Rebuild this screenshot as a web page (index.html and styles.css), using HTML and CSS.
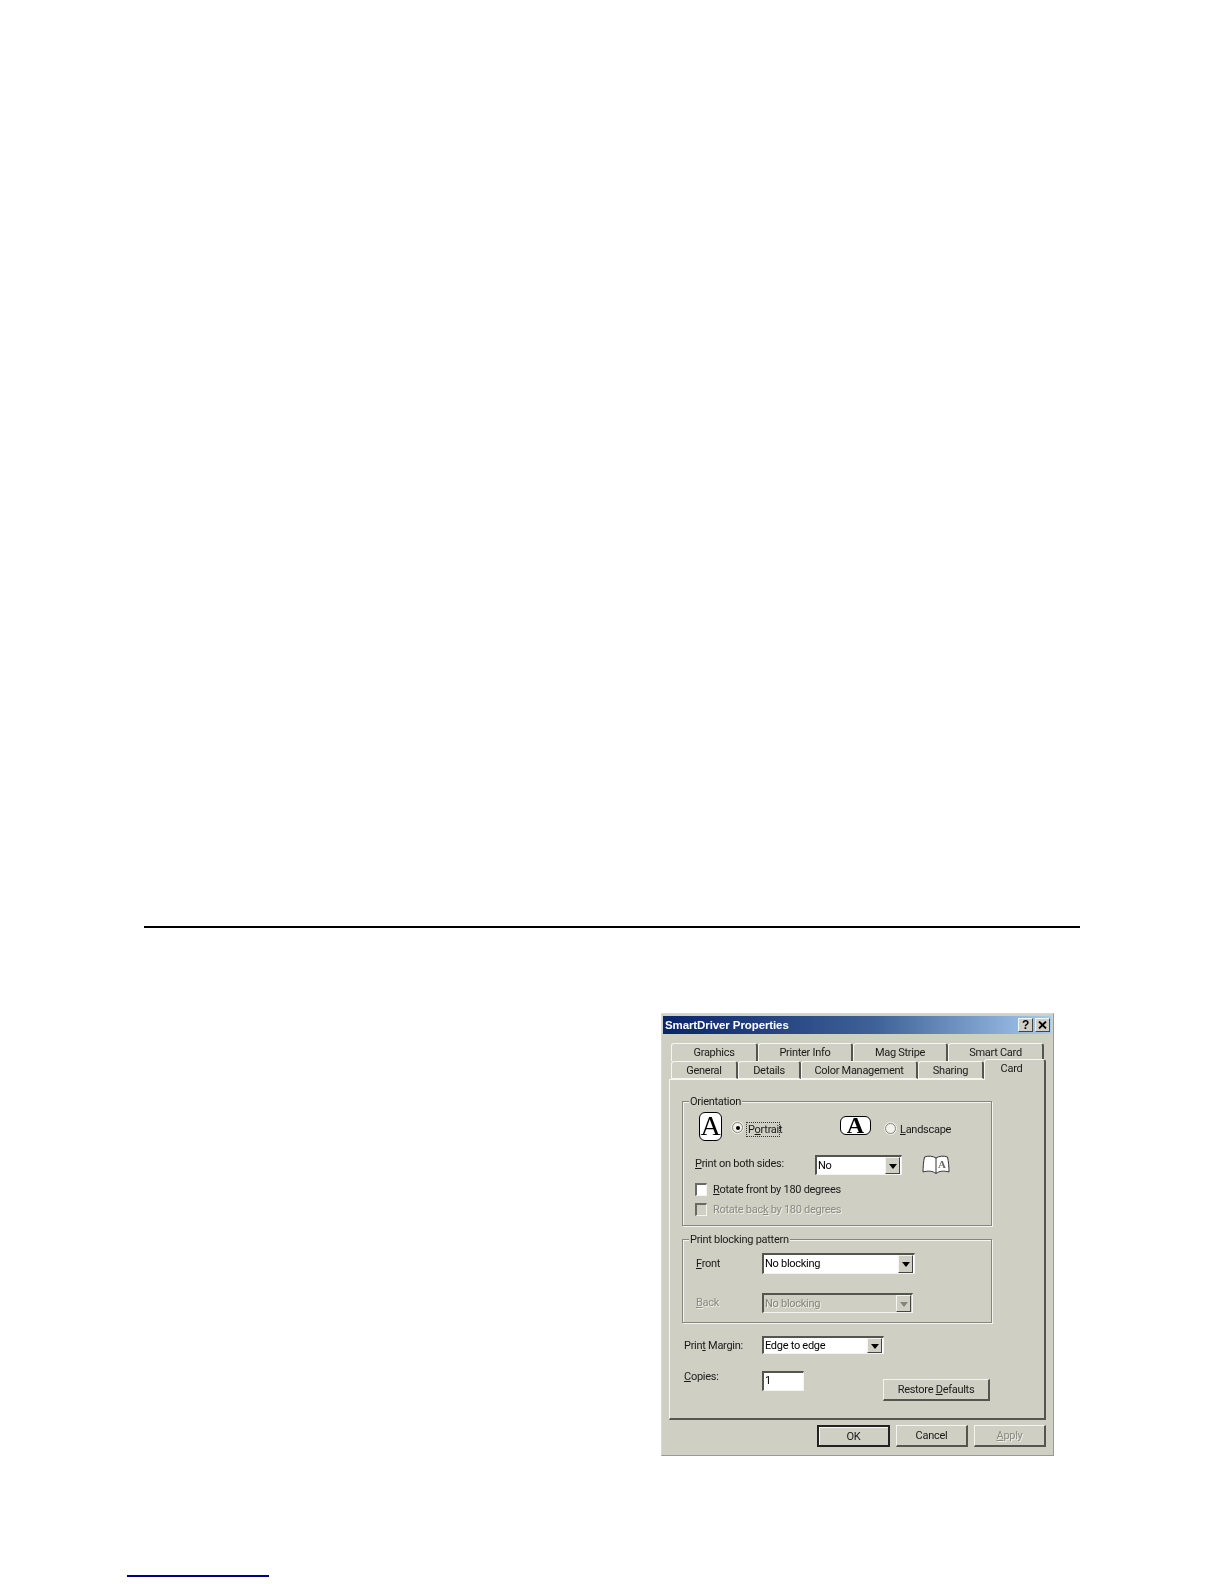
FILE: index.html
```html
<!DOCTYPE html>
<html lang="en">
<head>
<meta charset="utf-8">
<title>SmartDriver Properties</title>
<link rel="stylesheet" href="styles.css">
</head>
<body>
<div class="rule"></div>
<div class="dialog">
  <div class="titlebar">
    <span class="title">SmartDriver Properties</span>
    <span class="caption-btns">
      <span class="cap-btn">?</span>
      <span class="cap-btn"><svg width="9" height="8" viewBox="0 0 9 8"><path d="M1 0.5 L8 7.5 M8 0.5 L1 7.5" stroke="#000" stroke-width="1.8" fill="none"/></svg></span>
    </span>
  </div>
  <div class="tabs">
    <div class="tab-row back">
      <div class="tab w87">Graphics</div>
      <div class="tab w95">Printer Info</div>
      <div class="tab w95">Mag Stripe</div>
      <div class="tab w96">Smart Card</div>
    </div>
    <div class="tab-row front">
      <div class="tab w67">General</div>
      <div class="tab w63">Details</div>
      <div class="tab w117">Color Management</div>
      <div class="tab w66">Sharing</div>
      <div class="tab active">Card</div>
    </div>
  </div>
  <div class="panel">
    <div class="group group-orient">
      <span class="legend">Orientation</span>
      <div class="orient-row">
        <div class="page-icon portrait">A</div>
        <span class="radio checked"></span>
        <span class="focus">P<u>o</u>rtrait</span>
        <div class="page-icon landscape">A</div>
        <span class="radio"></span>
        <span class="radio-label"><u>L</u>andscape</span>
      </div>
      <div class="both-row">
        <span class="both-label"><u>P</u>rint on both sides:</span>
        <div class="combo combo-no"><span>No</span><span class="drop"></span></div>
        <svg class="book" width="28" height="20" viewBox="0 0 28 20">
          <path d="M1 17 C1 13 1.500 6 2.500 2 C6 0.500 11 1 14 3 C17 1 22 0.500 25.500 2 C26.500 6 27 13 27 17 C22 15.500 17 16 14 18.500 C11 16 6 15.500 1 17 Z" fill="#fff" stroke="#333" stroke-width="1"/>
          <path d="M14 3 V18.500" stroke="#333" stroke-width="1"/>
          <text x="16" y="13" class="book-a">A</text>
        </svg>
      </div>
      <label class="check-row"><span class="check"></span><span><u>R</u>otate front by 180 degrees</span></label>
      <label class="check-row off"><span class="check"></span><span>Rotate bac<u>k</u> by 180 degrees</span></label>
    </div>
    <div class="group group-block">
      <span class="legend">Print blocking pattern</span>
      <div class="block-row first">
        <span class="block-label"><u>F</u>ront</span>
        <div class="combo combo-wide"><span>No blocking</span><span class="drop"></span></div>
      </div>
      <div class="block-row off">
        <span class="block-label"><u>B</u>ack</span>
        <div class="combo combo-wide disabled"><span>No blocking</span><span class="drop"></span></div>
      </div>
    </div>
    <div class="margin-row">
      <span class="field-label">Prin<u>t</u> Margin:</span>
      <div class="combo combo-margin"><span>Edge to edge</span><span class="drop"></span></div>
    </div>
    <div class="copies-row">
      <span class="field-label"><u>C</u>opies:</span>
      <div class="input">1</div>
      <div class="btn restore"><span>Restore <u>D</u>efaults</span></div>
    </div>
  </div>
  <div class="footer">
    <div class="btn ok">OK</div>
    <div class="btn cancel">Cancel</div>
    <div class="btn apply"><span><u>A</u>pply</span></div>
  </div>
</div>
<div class="footer-link"></div>
</body>
</html>
```

FILE: styles.css
```css
* { box-sizing: border-box; }
html, body { margin: 0; padding: 0; background: #fff; }
body { height: 1584px; overflow: hidden; }

.rule { height: 2px; width: 936px; background: #000; margin: 926px 0 0 144px; }
.footer-link { height: 2px; width: 142px; background: #000080; margin: 119px 0 0 127px; }

.dialog {
  width: 393px; height: 443px; margin: 85px 0 0 661px;
  background: #cfcfc3;
  border: 1px solid #9a9a94; border-top-color: #d8d8d4; border-left-color: #d8d8d4;
  padding: 2px 2px 0 1px;
  font: 11px/14px Roboto, "Liberation Sans", sans-serif;
  letter-spacing: -0.28px;
  color: #1a1a1a;
  filter: blur(0.3px);
}
.titlebar {
  height: 18px; display: flex; align-items: center; justify-content: space-between;
  background: linear-gradient(90deg, #0a246a 0%, #3f6298 55%, #a6caf0 100%);
  padding: 0 1px 0 2px;
}
.title { color: #fff; font: bold 11.500px/18px "Liberation Sans", sans-serif; letter-spacing: -0.1px; }
.caption-btns { display: flex; gap: 2px; }
.cap-btn {
  width: 15px; height: 14px; display: flex; align-items: center; justify-content: center;
  background: #cfcfc3; font: bold 12px/14px "Liberation Sans", sans-serif; color: #000;
  border: 1px solid; border-color: #f4f4f0 #444 #444 #f4f4f0;
}

.tabs { margin-top: 9px; height: 36px; position: relative; z-index: 1; }
.tab-row { display: flex; height: 18px; margin-left: 8px; }
.tab-row.front { align-items: flex-end; }
.tab {
  height: 18px; text-align: center; line-height: 17px;
  border-top: 1px solid #f6f6f2; border-left: 1px solid #f6f6f2; border-right: 2px solid #55554f;
  border-radius: 3px 3px 0 0;
  background: #cfcfc3;
}
.w87 { width: 87px; } .w95 { width: 95px; } .w96 { width: 96px; }
.w67 { width: 67px; } .w63 { width: 63px; } .w117 { width: 117px; } .w66 { width: 66px; }
.tab.active { width: 62px; height: 21px; margin-bottom: -1px; margin-top: -2px; line-height: 17px; border-bottom: 0; position: relative; padding-right: 6px; }
.tab-row.front .tab:not(.active) { border-bottom: 1px solid #f6f6f2; }

.panel {
  margin-left: 6px; width: 377px; height: 341px; padding: 23px 0 0 12px;
  border: 1px solid; border-color: #f6f6f2 #55554f #55554f #f6f6f2;
  border-width: 1px 2px 2px 1px;
}
.group {
  position: relative; width: 310px;
  border: 1px solid #85857d; box-shadow: 1px 1px 0 #f4f4f0, inset 1px 1px 0 #f4f4f0;
}
.group-orient { height: 125px; padding: 10px 0 0 12px; margin-top: -2px; }
.group-block { height: 84px; margin-top: 13px; padding: 13px 0 0 13px; }
.legend { position: absolute; left: 6px; top: -7px; padding: 0 1px; background: #cfcfc3; }

.orient-row { display: flex; align-items: flex-start; height: 29px; padding-left: 4px; }
.page-icon {
  background: #fff; border: 1.500px solid #000; color: #000;
  font-family: "Liberation Serif", serif; text-align: center; letter-spacing: 0;
}
.portrait { width: 23px; height: 29px; border-radius: 6px; font-size: 28px; line-height: 25px; }
.landscape { width: 31px; height: 19px; border-radius: 6px; font-size: 24px; line-height: 17px; font-weight: bold; margin: 4px 0 0 60px; }
.radio {
  width: 11px; height: 11px; border-radius: 50%; background: #f2f2ea; margin-top: 10px;
  border: 1px solid #84847c; box-shadow: 0 0 0 1px #ecece6; position: relative; flex: none;
}
.portrait + .radio { margin-left: 10px; }
.landscape + .radio { margin-left: 14px; margin-top: 11px; }
.radio.checked::after {
  content: ""; position: absolute; left: 2.500px; top: 2.500px; width: 4px; height: 4px; border-radius: 50%; background: #000;
}
.focus { margin: 10px 0 0 3px; padding: 0 1px; height: 15px; border: 1px dotted #333; line-height: 13px; width: 34px; white-space: nowrap; }
.radio-label { margin: 11px 0 0 4px; }

.both-row { display: flex; align-items: center; margin-top: 14px; height: 20px; }
.both-label { width: 120px; margin-top: -2px; }
.book { margin-left: 20px; }

.combo {
  display: flex; align-items: center; justify-content: space-between;
  background: #fff; padding: 0 1px 0 1px; color: #000;
  border: 1px solid; border-width: 2px 1px 1px 2px; border-color: #55554f #f4f4f0 #f4f4f0 #55554f;
}
.combo-no { width: 87px; height: 20px; }
.combo-wide { width: 153px; height: 21px; }
.combo-margin { width: 122px; height: 18px; }
.drop {
  width: 15px; height: 100%; background: #cfcfc3; position: relative; flex: none;
  border: 1px solid; border-color: #f4f4f0 #444 #444 #f4f4f0;
}
.drop::after {
  content: ""; position: absolute; left: 2.500px; top: 50%; margin-top: -2px;
  border: 4px solid transparent; border-top: 5px solid #000; border-bottom: 0;
}
.combo.disabled { background: #cfcfc3; color: #85857d; height: 20px; width: 151px; }
.combo.disabled .drop::after { border-top-color: #85857d; }

.check-row { display: flex; align-items: center; gap: 6px; height: 13px; margin-top: 8px; }
.check-row.off { margin-top: 7px; }
.check {
  width: 12px; height: 13px; background: #fff; flex: none;
  border: 1px solid; border-width: 2px 1px 1px 2px; border-color: #6a6a64 #f4f4f0 #f4f4f0 #6a6a64;
}
.off { color: #8b8b83; text-shadow: 1px 1px 0 #eeeee8; }
.check-row.off .check { background: #cfcfc3; }

.block-row { display: flex; align-items: center; }
.block-row.off { margin-top: 19px; }
.block-label { width: 66px; }

.margin-row { display: flex; align-items: center; margin: 13px 0 0 2px; }
.margin-row .field-label { margin-top: 2px; }
.field-label { width: 78px; }
.copies-row { display: flex; align-items: flex-start; margin: 17px 0 0 2px; }
.copies-row .field-label { margin-top: -1px; }
.input {
  width: 42px; height: 20px; background: #fff; padding-left: 1px; color: #000; line-height: 16px;
  border: 1px solid; border-width: 2px 1px 1px 2px; border-color: #55554f #f4f4f0 #f4f4f0 #55554f;
}
.btn {
  display: flex; align-items: center; justify-content: center;
  background: #cfcfc3; height: 22px; padding-top: 1px;
  border: 1px solid; border-width: 1px 2px 2px 1px; border-color: #f4f4f0 #55554f #55554f #f4f4f0;
}
.restore { width: 107px; margin: 8px 0 0 79px; }
.footer { display: flex; justify-content: flex-end; gap: 6px; margin-top: 5px; padding-right: 5px; }
.ok { width: 73px; border: 2px solid #222; box-shadow: inset 1px 1px 0 #f4f4f0; }
.cancel, .apply { width: 72px; }
.apply span { color: #8b8b83; text-shadow: 1px 1px 0 #eeeee8; }
.book-a { font: bold 11px "Liberation Serif", serif; fill: #6a6a64; }
```
